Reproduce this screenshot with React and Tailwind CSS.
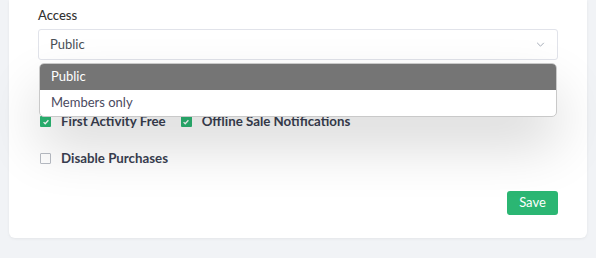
import { useState } from 'react';

function Check({ checked, label }) {
  return (
    <label className="flex items-center gap-[10px] text-[13.3px] font-bold text-[#3a3f51]">
      {checked ? (
        <span className="flex h-[11px] w-[11px] items-center justify-center rounded-[1px] bg-[#2bb673]">
          <svg viewBox="0 0 10 10" className="h-[8px] w-[8px]" fill="none" stroke="#fff" strokeWidth="1.6">
            <path d="M2 5.2l2 2 4-4.4" />
          </svg>
        </span>
      ) : (
        <span className="h-[11px] w-[11px] rounded-[1px] border border-[#b8bcc4] bg-white" />
      )}
      {label}
    </label>
  );
}

export default function App() {
  const [access] = useState('Public');

  return (
    <div className="min-h-screen bg-[#f1f3f6] px-[9px] pb-[20px]" style={{ fontFamily: 'Lato, "Noto Sans", sans-serif' }}>
      <div className="rounded-b-[6px] bg-white px-[29px] pt-[6px] pb-[23px] shadow-[0_1px_3px_rgba(0,0,0,0.06)]">
        <div className="text-[13px] leading-[18px] text-[#333] font-medium">Access</div>
        <div className="relative mt-[5px]">
          <div className="flex h-[31px] items-center justify-between rounded-[3px] border border-[#e1e3ea] bg-white px-[11px] text-[13px] text-[#495057]">
            <span>{access}</span>
            <svg viewBox="0 0 10 6" className="mr-[1px] h-[5px] w-[9px]" fill="none" stroke="#a6adb8" strokeWidth="1.2">
              <path d="M1 1l4 4 4-4" />
            </svg>
          </div>
          <div className="absolute left-[1px] right-[1px] top-[34px] z-10 overflow-hidden rounded-[5px] border border-[#c9c9c9] bg-white shadow-[0_28px_55px_rgba(0,0,0,0.16)]">
            <div className="flex h-[26px] items-center bg-[#757575] px-[11px] text-[13px] text-white">Public</div>
            <div className="flex h-[26px] items-center px-[11px] text-[13px] text-[#4a4a5e]">Members only</div>
          </div>
        </div>

        <div className="ml-[2px] mt-[52px] flex items-center gap-[15px]">
          <Check checked label="First Activity Free" />
          <Check checked label="Offline Sale Notifications" />
        </div>
        <div className="ml-[2px] mt-[17px]">
          <Check label="Disable Purchases" />
        </div>

        <div className="mt-[22px] flex justify-end">
          <button className="h-[24px] w-[51px] rounded-[3px] bg-[#2bb673] text-[13px] text-white">Save</button>
        </div>
      </div>
    </div>
  );
}
